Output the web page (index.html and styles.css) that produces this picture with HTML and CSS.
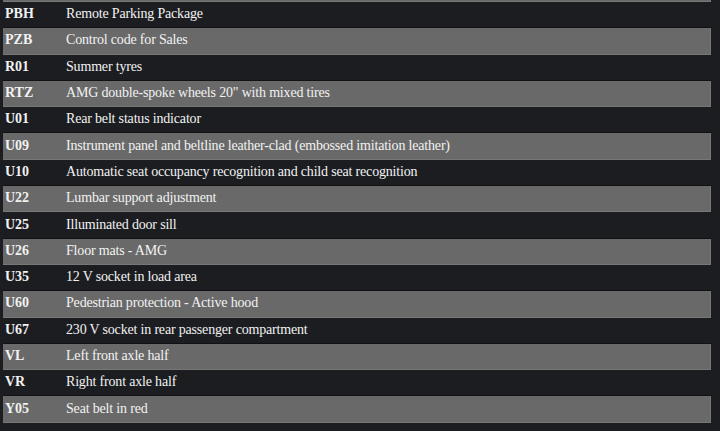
FILE: index.html
```html
<!DOCTYPE html>
<html>
<head>
<meta charset="utf-8">
<link rel="stylesheet" href="styles.css">
</head>
<body>
<div class="list">
  <div class="row odd top"></div>
  <div class="row"><span class="code">PBH</span><span class="desc">Remote Parking Package</span></div>
  <div class="row odd"><span class="code">PZB</span><span class="desc">Control code for Sales</span></div>
  <div class="row"><span class="code">R01</span><span class="desc">Summer tyres</span></div>
  <div class="row odd"><span class="code">RTZ</span><span class="desc">AMG double-spoke wheels 20" with mixed tires</span></div>
  <div class="row"><span class="code">U01</span><span class="desc">Rear belt status indicator</span></div>
  <div class="row odd"><span class="code">U09</span><span class="desc">Instrument panel and beltline leather-clad (embossed imitation leather)</span></div>
  <div class="row"><span class="code">U10</span><span class="desc">Automatic seat occupancy recognition and child seat recognition</span></div>
  <div class="row odd"><span class="code">U22</span><span class="desc">Lumbar support adjustment</span></div>
  <div class="row"><span class="code">U25</span><span class="desc">Illuminated door sill</span></div>
  <div class="row odd"><span class="code">U26</span><span class="desc">Floor mats - AMG</span></div>
  <div class="row"><span class="code">U35</span><span class="desc">12 V socket in load area</span></div>
  <div class="row odd"><span class="code">U60</span><span class="desc">Pedestrian protection - Active hood</span></div>
  <div class="row"><span class="code">U67</span><span class="desc">230 V socket in rear passenger compartment</span></div>
  <div class="row odd"><span class="code">VL</span><span class="desc">Left front axle half</span></div>
  <div class="row"><span class="code">VR</span><span class="desc">Right front axle half</span></div>
  <div class="row odd"><span class="code">Y05</span><span class="desc">Seat belt in red</span></div>
</div>
</body>
</html>
```
FILE: styles.css
```css
html, body {
  margin: 0;
  padding: 0;
  background: #1c1d21;
}
body {
  font-family: "Liberation Serif", "Times New Roman", serif;
  font-size: 14px;
  color: #f2f2f2;
}
.list {
  display: flex;
  flex-direction: column;
  width: 708px;
  margin-left: 3px;
}
.row {
  display: flex;
  align-items: center;
  height: 26.3px;
  box-sizing: border-box;
  padding-bottom: 2px;
}
.row.odd {
  background: #696969;
  box-shadow: inset -1px -1px 0 #777777, 0 -1px 0 #111114;
}
.row.top {
  height: 2px;
  padding: 0;
  box-shadow: inset -1px -1px 0 #777777;
}
.code {
  width: 61px;
  padding-left: 2px;
  font-weight: bold;
}
.desc {
  flex: 1;
  letter-spacing: -0.18px;
}
```
